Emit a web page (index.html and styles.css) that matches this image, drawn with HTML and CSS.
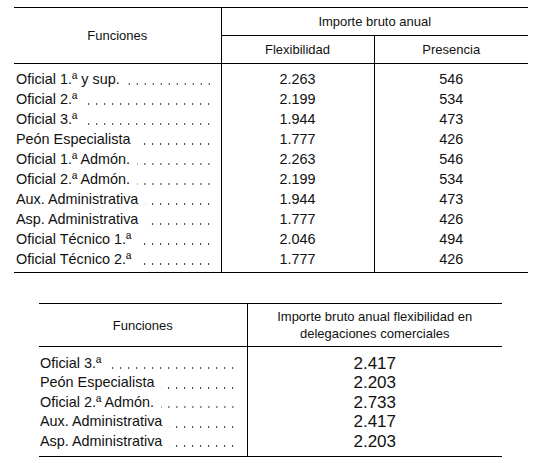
FILE: index.html
```html
<!DOCTYPE html>
<html lang="es">
<head>
<meta charset="utf-8">
<title>Importe bruto anual</title>
<link rel="stylesheet" href="styles.css">
</head>
<body>
<table class="tbl tbl-main">
  <colgroup><col class="c-fun"><col class="c-flex"><col class="c-pres"></colgroup>
  <thead>
    <tr>
      <th rowspan="2" class="h-fun">Funciones</th>
      <th colspan="2" class="h-top">Importe bruto anual</th>
    </tr>
    <tr>
      <th class="h-sub h-sep">Flexibilidad</th>
      <th class="h-sub">Presencia</th>
    </tr>
  </thead>
  <tbody>
    <tr><td class="lab"><div class="lbl"><span>Oficial 1.ª y sup.</span><span class="dots"></span></div></td><td class="num sep">2.263</td><td class="num">546</td></tr>
    <tr><td class="lab"><div class="lbl"><span>Oficial 2.ª</span><span class="dots"></span></div></td><td class="num sep">2.199</td><td class="num">534</td></tr>
    <tr><td class="lab"><div class="lbl"><span>Oficial 3.ª</span><span class="dots"></span></div></td><td class="num sep">1.944</td><td class="num">473</td></tr>
    <tr><td class="lab"><div class="lbl"><span>Peón Especialista</span><span class="dots"></span></div></td><td class="num sep">1.777</td><td class="num">426</td></tr>
    <tr><td class="lab"><div class="lbl"><span>Oficial 1.ª Admón.</span><span class="dots"></span></div></td><td class="num sep">2.263</td><td class="num">546</td></tr>
    <tr><td class="lab"><div class="lbl"><span>Oficial 2.ª Admón.</span><span class="dots"></span></div></td><td class="num sep">2.199</td><td class="num">534</td></tr>
    <tr><td class="lab"><div class="lbl"><span>Aux. Administrativa</span><span class="dots"></span></div></td><td class="num sep">1.944</td><td class="num">473</td></tr>
    <tr><td class="lab"><div class="lbl"><span>Asp. Administrativa</span><span class="dots"></span></div></td><td class="num sep">1.777</td><td class="num">426</td></tr>
    <tr><td class="lab"><div class="lbl"><span>Oficial Técnico 1.ª</span><span class="dots"></span></div></td><td class="num sep">2.046</td><td class="num">494</td></tr>
    <tr><td class="lab"><div class="lbl"><span>Oficial Técnico 2.ª</span><span class="dots"></span></div></td><td class="num sep">1.777</td><td class="num">426</td></tr>
  </tbody>
</table>

<table class="tbl tbl-del">
  <colgroup><col class="d-fun"><col class="d-val"></colgroup>
  <thead>
    <tr>
      <th class="h-fun">Funciones</th>
      <th class="h-del">Importe bruto anual flexibilidad en<br>delegaciones comerciales</th>
    </tr>
  </thead>
  <tbody>
    <tr><td class="lab"><div class="lbl"><span>Oficial 3.ª</span><span class="dots"></span></div></td><td class="num big">2.417</td></tr>
    <tr><td class="lab"><div class="lbl"><span>Peón Especialista</span><span class="dots"></span></div></td><td class="num big">2.203</td></tr>
    <tr><td class="lab"><div class="lbl"><span>Oficial 2.ª Admón.</span><span class="dots"></span></div></td><td class="num big">2.733</td></tr>
    <tr><td class="lab"><div class="lbl"><span>Aux. Administrativa</span><span class="dots"></span></div></td><td class="num big">2.417</td></tr>
    <tr><td class="lab"><div class="lbl"><span>Asp. Administrativa</span><span class="dots"></span></div></td><td class="num big">2.203</td></tr>
  </tbody>
</table>
</body>
</html>
```

FILE: styles.css
```css
html, body {
  margin: 0;
  padding: 0;
  background: #fff;
}
body {
  font-family: "Liberation Sans", Arial, sans-serif;
  color: #111;
  padding-top: 7px;
}
.tbl {
  border-collapse: collapse;
  table-layout: fixed;
  border-top: 1px solid #000;
  border-bottom: 1px solid #000;
}
.tbl th {
  font-weight: normal;
  font-size: 13px;
  padding: 0;
  text-align: center;
  vertical-align: middle;
}
.tbl td {
  padding: 0;
  font-size: 14.4px;
  vertical-align: middle;
}
.tbl thead tr:last-child th {
  border-bottom: 1px solid #000;
}
/* main table */
.tbl-main {
  margin-left: 14px;
  width: 514px;
}
.c-fun { width: 207px; }
.c-flex { width: 153px; }
.c-pres { width: 154px; }
.tbl-main .h-fun {
  border-right: 1px solid #000;
  border-bottom: 1px solid #000;
}
.tbl-main .h-top {
  height: 27px;
  border-bottom: 1px solid #000;
}
.tbl-main .h-sub {
  height: 27px;
}
.tbl-main .h-sep,
.tbl-main .sep {
  border-right: 1px solid #000;
}
.tbl-main td {
  line-height: 20px;
}
.tbl-main tbody tr:first-child td { padding-top: 5px; }
.tbl-main tbody tr:last-child td { padding-bottom: 3px; }
.tbl-main .lab { padding-left: 2px; padding-right: 11px; }
.lab { border-right: 1px solid #000; }
.lbl {
  display: flex;
  white-space: nowrap;
}
.dots {
  flex: 1;
  min-width: 0;
  margin-left: 7px;
  background-image: linear-gradient(to left, #3a3a3a 1.5px, transparent 1.5px);
  background-size: 8px 1.5px;
  background-repeat: repeat-x;
  background-position: right 0 bottom 5px;
}
.num {
  text-align: center;
}
/* delegaciones table */
.tbl-del {
  margin-left: 39px;
  margin-top: 30px;
  width: 463px;
}
.d-fun { width: 208px; }
.d-val { width: 255px; }
.tbl-del .h-fun {
  border-right: 1px solid #000;
  height: 42px;
}
.tbl-del .h-del {
  line-height: 17px;
}
.tbl-del td {
  line-height: 19.4px;
}
.tbl-del tbody tr:first-child td { padding-top: 7px; }
.tbl-del tbody tr:last-child td { padding-bottom: 5px; }
.tbl-del .lab { padding-left: 1px; padding-right: 13px; }
.tbl-del .dots { background-position: right 0 bottom 4.5px; }
.tbl-del .big {
  font-size: 17px;
}
```
